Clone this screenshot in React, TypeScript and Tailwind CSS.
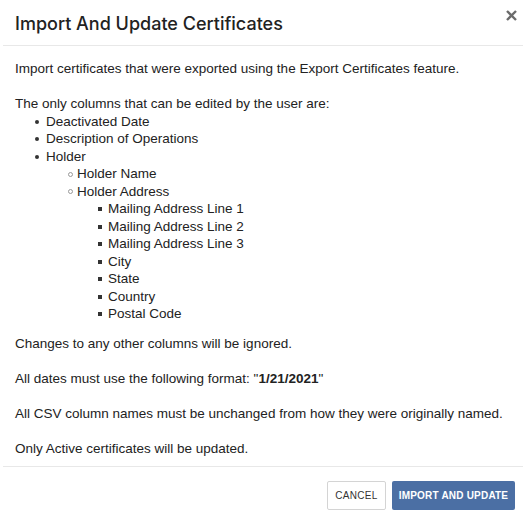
function Item({ kind, children }: { kind: 'disc' | 'circle' | 'square'; children: React.ReactNode }) {
  return (
    <li className="flex items-center">
      {kind === 'disc' && <span className="block shrink-0 w-[4px] h-[4px] -ml-[11px] mr-[7px] mt-[1px] rounded-full bg-[#333]" />}
      {kind === 'circle' && <span className="block shrink-0 w-[5px] h-[5px] -ml-[9px] mr-[4px] mt-[1px] rounded-full border border-[#999]" />}
      {kind === 'square' && <span className="block shrink-0 w-[4px] h-[4px] -ml-[10px] mr-[6px] mt-[1px] bg-[#333]" />}
      <span>{children}</span>
    </li>
  );
}

export default function App() {
  const level3 = [
    'Mailing Address Line 1',
    'Mailing Address Line 2',
    'Mailing Address Line 3',
    'City',
    'State',
    'Country',
    'Postal Code',
  ];

  return (
    <div className="w-[526px] h-[522px] bg-white text-[#222] flex flex-col overflow-hidden" style={{ fontFamily: '"Liberation Sans", Arial, sans-serif' }}>
      {/* Header */}
      <div className="h-[46px] shrink-0 mx-[3px] border-b border-[#e8e8e8] flex items-center justify-between pl-3 pr-0">
        <h1 className="text-[18px] font-medium text-[#222] pt-[2px]" style={{ fontFamily: 'Inter, "Liberation Sans", sans-serif' }}>
          Import And Update Certificates
        </h1>
        <button className="w-6 h-6 flex items-center justify-center -mt-[14px]">
          <svg width="11" height="11" viewBox="0 0 11 11">
            <path d="M1 1L10 10M10 1L1 10" stroke="#6b6b6b" strokeWidth="2.4" strokeLinecap="butt" />
          </svg>
        </button>
      </div>

      {/* Body */}
      <div className="flex-1 px-[15px] pt-[14px] text-[13.5px] leading-[17.5px] whitespace-nowrap">
        <p>Import certificates that were exported using the Export Certificates feature.</p>
        <p className="mt-[17.5px]">The only columns that can be edited by the user are:</p>
        <ul className="pl-[31px]">
          <Item kind="disc">Deactivated Date</Item>
          <Item kind="disc">Description of Operations</Item>
          <Item kind="disc">Holder</Item>
          <ul className="pl-[31px]">
            <Item kind="circle">Holder Name</Item>
            <Item kind="circle">Holder Address</Item>
            <ul className="pl-[31px]">
              {level3.map((item) => (
                <Item key={item} kind="square">
                  {item}
                </Item>
              ))}
            </ul>
          </ul>
        </ul>
        <p className="mt-[12.5px]">Changes to any other columns will be ignored.</p>
        <p className="mt-[17.5px]">
          All dates must use the following format: "<span className="font-bold">1/21/2021</span>"
        </p>
        <p className="mt-[17.5px]">All CSV column names must be unchanged from how they were originally named.</p>
        <p className="mt-[17.5px]">Only Active certificates will be updated.</p>
      </div>

      {/* Footer */}
      <div className="h-[56px] shrink-0 mx-[3px] border-t border-[#e8e8e8] flex items-start justify-end gap-[6px] pr-[8px] pt-[14px]">
        <button className="h-[29px] w-[59px] border border-[#d4d4d4] bg-white text-[10px] tracking-[0.3px] text-[#333] rounded-[2px]">
          CANCEL
        </button>
        <button className="h-[29px] w-[123px] bg-[#4b6fa4] text-white text-[10px] font-bold tracking-[0.2px] rounded-[2px]">
          IMPORT AND UPDATE
        </button>
      </div>
    </div>
  );
}
